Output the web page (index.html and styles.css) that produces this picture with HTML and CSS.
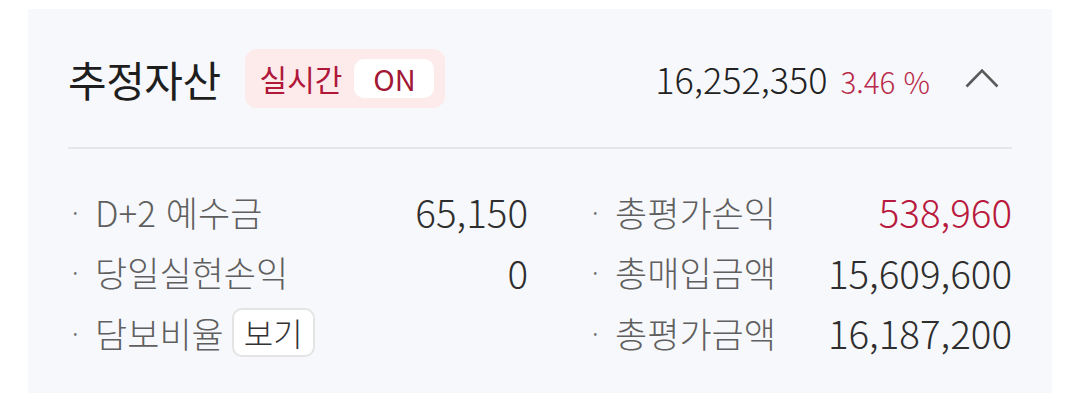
FILE: index.html
```html
<!DOCTYPE html>
<html lang="ko">
<head>
<meta charset="utf-8">
<link rel="stylesheet" href="styles.css">
</head>
<body>
<section class="card">
  <header class="head">
    <h1 class="title">추정자산</h1>
    <div class="live">
      <span class="live-label">실시간</span>
      <span class="live-on">ON</span>
    </div>
    <div class="total">
      <span class="total-value">16,252,350</span>
      <span class="total-rate">3.46 %</span>
    </div>
    <svg class="chevron" width="34" height="20" viewBox="0 0 34 20" aria-hidden="true">
      <polyline points="1.5,18.5 17,2.5 32.5,18.5" fill="none" stroke="#5a5a5a" stroke-width="2.6"/>
    </svg>
  </header>
  <div class="divider"></div>
  <div class="stats">
    <div class="col col-left">
      <div class="row"><span class="label">D+2 예수금</span><span class="value">65,150</span></div>
      <div class="row"><span class="label">당일실현손익</span><span class="value">0</span></div>
      <div class="row"><span class="label">담보비율</span><button class="view-btn">보기</button></div>
    </div>
    <div class="col col-right">
      <div class="row"><span class="label">총평가손익</span><span class="value red">538,960</span></div>
      <div class="row"><span class="label">총매입금액</span><span class="value">15,609,600</span></div>
      <div class="row"><span class="label">총평가금액</span><span class="value">16,187,200</span></div>
    </div>
  </div>
</section>
</body>
</html>
```
FILE: styles.css
```css
* { box-sizing: border-box; }
body {
  margin: 0;
  background: #ffffff;
  font-family: "Noto Sans CJK KR", "Noto Sans", sans-serif;
}
.card {
  margin: 9px 28px 0;
  height: 384px;
  background: #f7f8fb;
  padding: 0 40px;
}
.head {
  height: 138px;
  display: flex;
  align-items: center;
}
.title {
  margin: 0;
  font-size: 42px;
  font-weight: 400;
  color: #1e1e1e;
  letter-spacing: -0.5px;
}
.live {
  margin-left: 24px;
  height: 59px;
  padding: 0 11px 0 15px;
  display: flex;
  align-items: center;
  gap: 12px;
  background: #fdeaeb;
  border-radius: 12px;
}
.live-label {
  font-size: 30px;
  color: #b0183a;
}
.live-on {
  height: 39px;
  width: 80px;
  display: flex;
  align-items: center;
  justify-content: center;
  background: #ffffff;
  border-radius: 10px;
  font-size: 29px;
  color: #a11735;
}
.total {
  margin-left: auto;
  display: flex;
  align-items: baseline;
  gap: 13px;
}
.total-value {
  font-size: 36px;
  font-weight: 300;
  color: #222222;
}
.total-rate {
  font-size: 29.5px;
  font-weight: 300;
  color: #b8294a;
}
.chevron {
  margin-left: 35px;
  margin-right: 13px;
}
.divider {
  height: 2px;
  background: #e5e6ea;
}
.stats {
  display: flex;
  padding-top: 32px;
}
.col-left { width: 460px; }
.col-right { margin-left: 60px; flex: 1; }
.row {
  height: 60.5px;
  display: flex;
  align-items: center;
  justify-content: space-between;
}
.label {
  display: flex;
  align-items: center;
  font-size: 35px;
  font-weight: 300;
  color: #5f5f5f;
}
.label::before {
  content: "·";
  width: 23px;
  padding-left: 4px;
  font-size: 26px;
  color: #777777;
}
.value {
  font-size: 38.5px;
  font-weight: 300;
  color: #2e2e2e;
}
.value.red { color: #b8193c; }
.col-left .row:last-child { justify-content: flex-start; }
.view-btn {
  margin-left: 8px;
  height: 49px;
  padding: 0 10px;
  background: #ffffff;
  border: 2px solid #e4e4e4;
  border-radius: 10px;
  font-family: inherit;
  font-size: 32px;
  font-weight: 300;
  line-height: 1;
  color: #333333;
}
```
